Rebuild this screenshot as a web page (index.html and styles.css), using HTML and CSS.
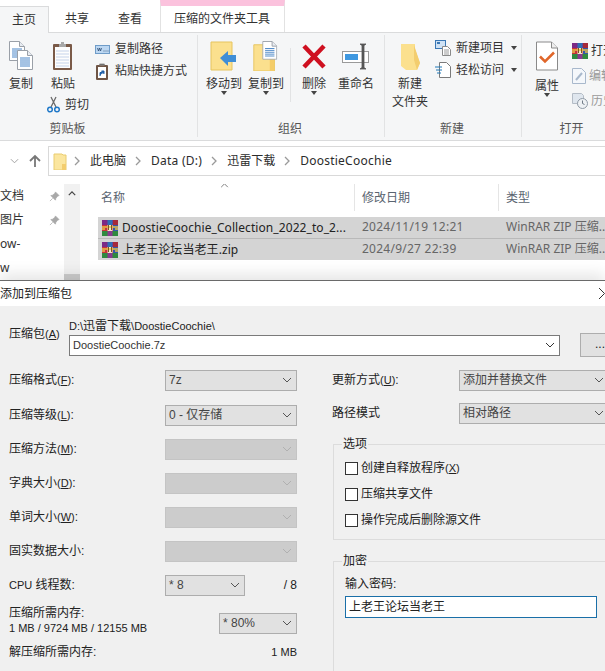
FILE: index.html
```html
<!DOCTYPE html>
<html lang="zh-CN">
  <head>
    <meta charset="UTF-8" />
    <title>添加到压缩包</title>
    <link rel="stylesheet" href="styles.css">
  </head>
  <body>
    <svg class="defs" width="0" height="0">
      <symbol id="rar" viewBox="0 0 16 16">
        <rect x="0" y="0" width="16" height="5" fill="#7b2a86"/>
        <rect x="5.5" y="0" width="5" height="5" fill="#2f6fb5"/>
        <rect x="11" y="0" width="5" height="5" fill="#a52a3a"/>
        <rect x="0" y="5" width="16" height="6" fill="#c8323a"/>
        <rect x="5.5" y="5" width="5" height="6" fill="#f1e6c8"/>
        <rect x="11" y="5" width="5" height="6" fill="#3558a8"/>
        <rect x="0" y="11" width="16" height="5" fill="#2f8a3f"/>
        <rect x="5.5" y="11" width="5" height="5" fill="#8a3a8f"/>
        <path d="M0 7h16M0 9h3M13 9h3" stroke="#e6c04a" stroke-width="1.4"/>
        <path d="M6.5 5v5M9.5 5v5" stroke="#7a5a20" stroke-width="1"/>
      </symbol>
      <symbol id="chev" viewBox="0 0 10 6">
        <path d="M1 1l4 4 4-4" fill="none" stroke="currentColor" stroke-width="1"/>
      </symbol>
      <symbol id="crumb" viewBox="0 0 6 10">
        <path d="M1 1l4 4-4 4" fill="none" stroke="#9a9a9a" stroke-width="1.3"/>
      </symbol>
      <symbol id="pin" viewBox="0 0 12 12">
        <path d="M7 1l4 4-1.5.5L7.500 8 7 10 2 5l2-.5L6.500 2.500zM4 8l-3 3" fill="#a8a8a8" stroke="#a8a8a8" stroke-width=".8"/>
      </symbol>
      <symbol id="page-lines" viewBox="0 0 16 20">
        <path d="M.5.500h10l5 5v14H.5z" fill="#fff" stroke="#9aa0a8"/>
        <path d="M10.500.500v5h5" fill="#e8ecf2" stroke="#9aa0a8"/>
        <path d="M3 8h10M3 10h10M3 12h10M3 14h10M3 16h10" stroke="#4a86c8"/>
      </symbol>
    </svg>

    <div class="page">
      <div class="tabs">
        <div class="tab active">主页</div>
        <div class="tab">共享</div>
        <div class="tab">查看</div>
        <div class="tab tool">压缩的文件夹工具</div>
      </div>

      <div class="ribbon">
        <section class="group clipboard">
          <div class="group-body">
            <div class="big w42">
              <svg class="icon" width="24" height="30" viewBox="0 0 24 30">
                <use href="#page-lines" x="0" y="0" width="16" height="20"/>
                <use href="#page-lines" x="8" y="9" width="16" height="20"/>
              </svg>
              <span>复制</span>
            </div>
            <div class="big w42">
              <svg class="icon" width="22" height="30" viewBox="0 0 22 30">
                <rect x="1" y="3" width="19" height="26" rx="1" fill="#7a5a48"/>
                <rect x="3" y="6" width="15" height="21" fill="#fdfdfd"/>
                <path d="M4 10h13M4 13h13M4 16h13M4 19h13M4 22h13M4 25h13" stroke="#c5d3ea"/>
                <path d="M7 6V3h2V1h3v2h2v3z" fill="#a8a8a8"/>
              </svg>
              <span>粘贴</span>
              <div class="small cut">
                <svg width="13" height="17" viewBox="0 0 13 17">
                  <path d="M4 1l5 10M9 1L4 11" stroke="#6a6a6a" stroke-width="1.300"/>
                  <circle cx="3" cy="13.500" r="2.300" fill="none" stroke="#1f78c8" stroke-width="1.500"/>
                  <circle cx="10" cy="13.500" r="2.300" fill="none" stroke="#1f78c8" stroke-width="1.500"/>
                </svg>
                <span>剪切</span>
              </div>
            </div>
            <div class="small-col">
              <div class="small">
                <svg width="15" height="9" viewBox="0 0 15 9">
                  <rect x=".5" y=".5" width="14" height="8" fill="#bcd7f2" stroke="#6f9cc8"/>
                  <path d="M2.500 3l1 3 1-3 1 3 1-3M8.500 6h1M10.500 6h1M12.500 6h1" fill="none" stroke="#2c4a70" stroke-width=".8"/>
                </svg>
                <span>复制路径</span>
              </div>
              <div class="small">
                <svg width="15" height="17" viewBox="0 0 15 17">
                  <rect x="1" y="2" width="12" height="15" rx="1" fill="#6f5546"/>
                  <rect x="3" y="4" width="8" height="11" fill="#fff"/>
                  <path d="M4.500 2V1h5v1z" stroke="#999"/>
                  <path d="M5 13V9.500h2.500M6 10l3 0M9 8l-2.500 0 2.500 2.500z" fill="#1f5fa8" stroke="#1f5fa8"/>
                </svg>
                <span>粘贴快捷方式</span>
              </div>
            </div>
          </div>
          <div class="group-label">剪贴板</div>
        </section>

        <section class="group organize">
          <div class="group-body">
            <div class="big w42 start6">
              <svg class="icon" width="28" height="30" viewBox="0 0 28 30">
                <path d="M1 1h21v28H1z" fill="#fbe08e" stroke="#e6c45f"/>
                <path d="M10 20l8-7v4h8v7h-8v4z" fill="#3f8ed6" transform="translate(0 -3)"/>
              </svg>
              <span>移动到</span>
              <i class="caret"></i>
            </div>
            <div class="big w42">
              <svg class="icon" width="28" height="32" viewBox="0 0 28 32">
                <path d="M1 4h22v28H1z" fill="#fbe08e" stroke="#e6c45f"/>
                <path d="M18 10h5v22h-5z" fill="#f4cd6a"/>
                <use href="#page-lines" x="10" y="0" width="16" height="20"/>
              </svg>
              <span>复制到</span>
              <i class="caret"></i>
            </div>
            <div class="vsep"></div>
            <div class="big w42">
              <svg class="icon" width="26" height="30" viewBox="0 0 26 30">
                <path d="M3 5l20 21M23 5L3 26" stroke="#cf1020" stroke-width="4.500"/>
              </svg>
              <span>删除</span>
              <i class="caret"></i>
            </div>
            <div class="big w42">
              <svg class="icon" width="30" height="30" viewBox="0 0 30 30">
                <rect x="1.500" y="10.500" width="26" height="11" fill="#fff" stroke="#9a9a9a"/>
                <rect x="4" y="13" width="13" height="6" fill="#3f98e0"/>
                <path d="M19 3h6l-2 1.500v22L25 28h-6l2-1.500v-22z" fill="#555" stroke="#555" stroke-width=".8"/>
              </svg>
              <span>重命名</span>
            </div>
          </div>
          <div class="group-label">组织</div>
        </section>

        <section class="group create">
          <div class="group-body">
            <div class="big new-folder">
              <svg class="icon" width="24" height="30" viewBox="0 0 24 30">
                <path d="M3 3h14v5l5 14-3 7H8L3 25z" fill="#fbe08e"/>
                <path d="M16 4l6 18-3 7-3-10z" fill="#f3cd6e"/>
              </svg>
              <span>新建</span>
              <span>文件夹</span>
            </div>
            <div class="small-col wide">
              <div class="small">
                <svg width="16" height="16" viewBox="0 0 16 16">
                  <rect x=".5" y=".5" width="10" height="8" fill="#cfe2f5" stroke="#3b78b5"/>
                  <rect x="2" y="2" width="3" height="2" fill="#3b78b5"/>
                  <path d="M7.500 6.500h5l3 3v6h-8z" fill="#fff" stroke="#8a8a8a"/>
                  <path d="M9 10h5M9 12h5M9 14h5" stroke="#9a9a9a"/>
                </svg>
                <span>新建项目</span>
                <i class="caret side"></i>
              </div>
              <div class="small">
                <svg width="16" height="16" viewBox="0 0 16 16">
                  <path d="M4.500.500h7l4 4v11h-11z" fill="#fff" stroke="#7a7a7a"/>
                  <path d="M0 5h7M1 8h6M2 11h4" stroke="#1f78b8"/>
                </svg>
                <span>轻松访问</span>
                <i class="caret side"></i>
              </div>
            </div>
          </div>
          <div class="group-label">新建</div>
        </section>

        <section class="group open">
          <div class="group-body">
            <div class="big props">
              <svg class="icon" width="22" height="29" viewBox="0 0 22 29">
                <path d="M.5.500h15l6 6v22H.5z" fill="#fff" stroke="#8a8a8a"/>
                <path d="M15.500.500v6h6" fill="#eee" stroke="#8a8a8a"/>
                <path d="M4 15l5 5 9-9" fill="none" stroke="#e0662a" stroke-width="2.500"/>
              </svg>
              <span>属性</span>
              <i class="caret"></i>
            </div>
            <div class="small-col narrow">
              <div class="small"><svg width="16" height="16"><use href="#rar"/></svg><span>打开</span></div>
              <div class="small muted">
                <svg width="14" height="16" viewBox="0 0 14 16">
                  <path d="M.5.500h9l4 4v11H.5z" fill="#f4f7fb" stroke="#a8b8cc"/>
                  <path d="M4 12l6-7" stroke="#a8b8cc" stroke-width="2"/>
                </svg>
                <span>编辑</span>
              </div>
              <div class="small muted">
                <svg width="16" height="16" viewBox="0 0 16 16">
                  <path d="M.5.500h9l2 2v8H.5z" fill="#dfe6ee" stroke="#b4bcc6"/>
                  <circle cx="10.500" cy="10.500" r="5" fill="#eef1f4" stroke="#8f9aa6"/>
                  <path d="M10.500 7.500v3l2 1" fill="none" stroke="#6f7a86"/>
                </svg>
                <span>历史</span>
              </div>
            </div>
          </div>
          <div class="group-label">打开</div>
        </section>
      </div>

      <div class="address-row">
        <svg class="back-chev" width="9" height="6"><use href="#chev"/></svg>
        <svg class="up" width="14" height="14" viewBox="0 0 14 14">
          <path d="M7 13V2M2 7l5-5 5 5" fill="none" stroke="#777" stroke-width="1.800"/>
        </svg>
        <div class="address">
          <svg class="addr-folder" width="14" height="17" viewBox="0 0 14 17">
            <path d="M1 1h8l1 1h3v15H1z" fill="#fbe69f" stroke="#e9cc70"/>
            <path d="M9 11h4v6H9z" fill="#f3cd6e"/>
          </svg>
          <svg class="crumb" width="6" height="10"><use href="#crumb"/></svg>
          <span>此电脑</span>
          <svg class="crumb" width="6" height="10"><use href="#crumb"/></svg>
          <span class="latin">Data (D:)</span>
          <svg class="crumb" width="6" height="10"><use href="#crumb"/></svg>
          <span>迅雷下载</span>
          <svg class="crumb" width="6" height="10"><use href="#crumb"/></svg>
          <span class="latin">DoostieCoochie</span>
        </div>
      </div>

      <div class="browser">
        <div class="nav">
          <div class="nav-item"><span>文档</span><svg width="11" height="11"><use href="#pin"/></svg></div>
          <div class="nav-item"><span>图片</span><svg width="11" height="11"><use href="#pin"/></svg></div>
          <div class="nav-item"><span>ow-</span></div>
          <div class="nav-item"><span>w</span></div>
        </div>
        <div class="scrollbar">
          <svg width="8" height="5" class="scroll-up" viewBox="0 0 10 6"><path d="M1 5l4-4 4 4" fill="none" stroke="#444" stroke-width="1.500"/></svg>
          <div class="thumb"></div>
        </div>
        <div class="files">
          <div class="file-head">
            <div class="col name">名称<svg class="sort" width="9" height="5" viewBox="0 0 10 6"><path d="M1 5l4-4 4 4" fill="none" stroke="#666"/></svg></div>
            <div class="col">修改日期</div>
            <div class="col last">类型</div>
          </div>
          <div class="file-row first">
            <div class="col name"><svg width="16" height="16"><use href="#rar"/></svg><span>DoostieCoochie_Collection_2022_to_2...</span></div>
            <div class="col date">2024/11/19 12:21</div>
            <div class="col last">WinRAR ZIP 压缩...</div>
          </div>
          <div class="file-row">
            <div class="col name"><svg width="16" height="16"><use href="#rar"/></svg><span>上老王论坛当老王.zip</span></div>
            <div class="col date">2024/9/27 22:39</div>
            <div class="col last">WinRAR ZIP 压缩...</div>
          </div>
        </div>
      </div>

      <div class="dialog">
        <div class="titlebar">
          <span>添加到压缩包</span>
          <svg width="6" height="11" viewBox="0 0 6 11"><path d="M0 0l5.500 5.500L0 11" fill="none" stroke="#333"/></svg>
        </div>
        <div class="dialog-body">
          <div class="archive">
            <div class="archive-label">压缩包<span class="lat">(<u>A</u>)</span></div>
            <div class="archive-field">
              <div class="archive-path"><span class="lat">D:\</span>迅雷下载<span class="lat">\DoostieCoochie\</span></div>
              <div class="combo"><span class="lat">DoostieCoochie.7z</span><svg width="10" height="6"><use href="#chev"/></svg></div>
            </div>
            <div class="browse-btn">...</div>
          </div>

          <div class="columns">
            <div class="col-left">
              <div class="field-row"><label>压缩格式<span class="lat">(<u>F</u>)</span>:</label><div class="select"><span>7z</span><svg width="10" height="6"><use href="#chev"/></svg></div></div>
              <div class="field-row"><label>压缩等级<span class="lat">(<u>L</u>)</span>:</label><div class="select"><span>0 - 仅存储</span><svg width="10" height="6"><use href="#chev"/></svg></div></div>
              <div class="field-row"><label>压缩方法<span class="lat">(<u>M</u>)</span>:</label><div class="select off"><span></span><svg width="10" height="6"><use href="#chev"/></svg></div></div>
              <div class="field-row"><label>字典大小<span class="lat">(<u>D</u>)</span>:</label><div class="select off"><span></span><svg width="10" height="6"><use href="#chev"/></svg></div></div>
              <div class="field-row"><label>单词大小<span class="lat">(<u>W</u>)</span>:</label><div class="select off"><span></span><svg width="10" height="6"><use href="#chev"/></svg></div></div>
              <div class="field-row"><label>固实数据大小:</label><div class="select off"><span></span><svg width="10" height="6"><use href="#chev"/></svg></div></div>
              <div class="field-row cpu"><label><span class="lat">CPU</span> 线程数:</label><div class="select short"><span>* 8</span><svg width="10" height="6"><use href="#chev"/></svg></div><span class="push">/ 8</span></div>
              <div class="memory-row">
                <div class="memory-text">
                  <div>压缩所需内存:</div>
                  <div class="lat">1 MB / 9724 MB / 12155 MB</div>
                </div>
                <div class="select percent"><span>* 80%</span><svg width="10" height="6"><use href="#chev"/></svg></div>
              </div>
              <div class="decompress-row"><span>解压缩所需内存:</span><span class="lat">1 MB</span></div>
            </div>

            <div class="col-right">
              <div class="field-row update"><label>更新方式<span class="lat">(<u>U</u>)</span>:</label><div class="select long"><span>添加并替换文件</span><svg width="10" height="6"><use href="#chev"/></svg></div></div>
              <div class="field-row update"><label>路径模式</label><div class="select long"><span>相对路径</span><svg width="10" height="6"><use href="#chev"/></svg></div></div>

              <fieldset class="options">
                <legend>选项</legend>
                <div class="check"><i class="box"></i><span>创建自释放程序<span class="lat">(<u>X</u>)</span></span></div>
                <div class="check"><i class="box"></i><span>压缩共享文件</span></div>
                <div class="check"><i class="box"></i><span>操作完成后删除源文件</span></div>
              </fieldset>

              <fieldset class="encrypt">
                <legend>加密</legend>
                <div class="password-label">输入密码:</div>
                <div class="password">上老王论坛当老王</div>
              </fieldset>
            </div>
          </div>
        </div>
      </div>
    </div>
  </body>
</html>
```

FILE: styles.css
```css
html,
body {
  margin: 0;
  padding: 0;
  overflow: hidden;
}
body {
  font-family: "Noto Sans", "Noto Sans CJK SC", sans-serif;
  font-size: 12px;
  line-height: 16px;
  color: #333;
  background: #fff;
}
svg {
  display: block;
  flex: none;
}
.defs {
  position: absolute;
}
.page {
  width: 605px;
  height: 671px;
  overflow: hidden;
}

/* ribbon tabs */
.tabs {
  display: flex;
  height: 32px;
  border-bottom: 1px solid #dadbdc;
}
.tab {
  margin-top: 6px;
  height: 26px;
  line-height: 26px;
  margin-left: 29px;
  white-space: nowrap;
}
.tab.active {
  margin-left: 0;
  width: 49px;
  height: 27px;
  box-sizing: border-box;
  padding-left: 12px;
  background: #f5f6f7;
  border-top: 1px solid #dadbdc;
  border-right: 1px solid #dadbdc;
  margin-right: -13px;
}
.tab.tool {
  margin-top: 0;
  margin-left: 18px;
  height: 32px;
  box-sizing: border-box;
  width: 125px;
  padding-left: 13px;
  line-height: 26px;
  border-top: 6px solid #fbc2dd;
  border-left: 1px solid #e2e2e2;
  border-right: 1px solid #e2e2e2;
}

/* ribbon */
.ribbon {
  display: flex;
  height: 107px;
  background: #f5f6f7;
  border-bottom: 1px solid #dadbdc;
  overflow: hidden;
}
.group {
  margin-top: 2px;
  height: 102px;
  box-sizing: border-box;
  border-right: 1px solid #e2e3e4;
  flex: none;
}
.clipboard { width: 198px; }
.organize { width: 187px; }
.create { width: 137px; }
.open { width: 83px; border-right: 0; }
.group-body {
  display: flex;
  height: 85px;
}
.group-label {
  text-align: center;
  color: #555;
  line-height: 17px;
}
.clipboard .group-label { padding-right: 62px; }
.organize .group-label { padding-right: 2px; }
.create .group-label { padding-right: 2px; }
.open .group-label { padding-left: 16px; }

.big {
  display: flex;
  flex-direction: column;
  align-items: center;
  flex: none;
  padding-top: 6px;
  white-space: nowrap;
}
.big .icon {
  height: 30px;
  margin-bottom: 5px;
}
.w42 { width: 42px; }
.start6 { margin-left: 5px; }
.small {
  display: flex;
  align-items: center;
  gap: 5px;
  white-space: nowrap;
}
.small-col {
  display: flex;
  flex-direction: column;
  gap: 6px;
  padding: 6px 0 0 11px;
}
.small-col .small { height: 16px; }
.cut {
  margin-top: 4px;
  margin-left: 10px;
}
.vsep {
  width: 1px;
  height: 54px;
  margin: 13px 2px 0 3px;
  background: #e2e3e4;
}
.caret {
  width: 0;
  height: 0;
  margin-top: -1px;
  border-left: 3px solid transparent;
  border-right: 3px solid transparent;
  border-top: 4px solid #444;
}
.caret.side {
  margin: 0 0 0 2px;
}
.new-folder {
  width: 50px;
  line-height: 18px;
}
.new-folder .icon {
  margin-bottom: 4px;
}
.small-col.wide {
  padding-left: 0;
  margin-top: -1px;
  gap: 6px;
}
.small-col.narrow {
  padding-left: 0;
  gap: 9px;
  margin-top: 2px;
}
.small-col.narrow .small {
  gap: 3px;
}
.props {
  width: 50px;
}
.props .icon {
  margin-bottom: 7px;
}
.muted {
  color: #9a9a9a;
}

/* address bar */
.address-row {
  display: flex;
  align-items: center;
  height: 30px;
  margin-top: 5px;
  padding-left: 10px;
}
.back-chev {
  color: #999;
  margin-right: 9px;
}
.up {
  margin-right: 6px;
}
.address {
  flex: 1;
  display: flex;
  align-items: center;
  height: 30px;
  box-sizing: border-box;
  padding-left: 4px;
  border: 1px solid #d9d9d9;
  border-right: 0;
  white-space: nowrap;
}
.address span {
  color: #2b2b2b;
}
.latin {
  letter-spacing: 0.25px;
}
.crumb {
  margin: 0 10px 0 9px;
}
.addr-folder + .crumb {
  margin-left: 7px;
}

/* file list */
.browser {
  display: flex;
  height: 104px;
}
.nav {
  width: 64px;
  padding-top: 8px;
  box-sizing: border-box;
}
.nav-item {
  display: flex;
  justify-content: space-between;
  align-items: center;
  height: 24px;
  padding: 0 4px 0 0;
}
.scrollbar {
  position: relative;
  width: 16px;
  margin-top: 8px;
  background: #f1f1f1;
}
.scroll-up {
  margin: 7px 0 0 4px;
}
.thumb {
  position: absolute;
  left: 0;
  right: 0;
  bottom: 0;
  height: 6px;
  background: #cdcdcd;
}
.files {
  margin-left: 18px;
  flex: 1;
  min-width: 0;
}
.file-head,
.file-row {
  display: grid;
  grid-template-columns: 257px 144px 1fr;
}
.file-head {
  height: 27px;
  margin-top: 8px;
  margin-bottom: 6px;
  color: #5a6470;
  line-height: 27px;
}
.file-head .col {
  position: relative;
  border-right: 1px solid #e5e5e5;
}
.file-head .last {
  border-right: 0;
}
.sort {
  position: absolute;
  left: 122px;
  top: -1px;
}
.col {
  padding-left: 7px;
  white-space: nowrap;
  overflow: hidden;
}
.col.name {
  padding-left: 3px;
}
.file-row {
  height: 21px;
  line-height: 20px;
  background: #d4d4d4;
  color: #666;
}
.file-row.first {
  height: 22px;
  box-sizing: border-box;
  border-bottom: 1px solid #b9b9b9;
}
.file-row .name {
  display: flex;
  align-items: center;
  gap: 4px;
  padding-left: 4px;
  color: #222;
  letter-spacing: 0.08px;
}
.date {
  letter-spacing: 0.25px;
}

/* add to archive dialog */
.dialog {
  position: relative;
  border-top: 1px solid #6a6a6a;
  box-shadow: 0 -6px 14px rgba(0, 0, 0, 0.1);
  background: #f0f0f0;
  color: #222;
  font-family: "Liberation Sans", "Noto Sans CJK SC", sans-serif;
}
.lat {
  font-size: 11px;
}
.titlebar {
  display: flex;
  justify-content: space-between;
  align-items: center;
  height: 25px;
  background: #fff;
}
.dialog-body {
  height: 366px;
  overflow: hidden;
}
u {
  text-underline-offset: 1px;
}
.archive {
  display: flex;
  padding: 12px 0 0 9px;
}
.archive-label {
  width: 60px;
  flex: none;
  margin-top: 8px;
}
.archive-field {
  width: 491px;
  flex: none;
}
.archive-path {
  height: 17px;
}
.combo,
.select {
  display: flex;
  justify-content: space-between;
  align-items: center;
  height: 21px;
  box-sizing: border-box;
  padding: 0 4px 1px 3px;
  white-space: nowrap;
}
.combo {
  background: #fff;
  border: 1px solid #7a7a7a;
  color: #333;
}
.browse-btn {
  flex: none;
  width: 40px;
  height: 24px;
  margin: 15px 0 0 20px;
  box-sizing: border-box;
  background: #e1e1e1;
  border: 1px solid #adadad;
  text-align: center;
  line-height: 20px;
}
.columns {
  display: flex;
  margin-top: 13px;
  padding-left: 9px;
  gap: 35px;
}
.col-left {
  width: 288px;
  flex: none;
}
.col-right {
  width: 300px;
  flex: none;
}
.field-row {
  display: flex;
  align-items: center;
  height: 21px;
  margin-bottom: 13px;
  white-space: nowrap;
}
.col-left .field-row:first-child {
  margin-bottom: 14px;
}
.field-row label {
  width: 156px;
  flex: none;
  padding-bottom: 2px;
}
.select {
  width: 132px;
  flex: none;
  background: #e1e1e1;
  border: 1px solid #adadad;
  color: #444;
}
.select svg {
  color: #555;
}
.select.off {
  background: #cccccc;
  border-color: #c4c4c4;
}
.select.off svg {
  color: #b0b0b0;
}
.select.short {
  width: 80px;
}
.push {
  margin-left: auto;
  padding-bottom: 2px;
}
.cpu {
  margin-bottom: 11px;
}
.memory-row {
  display: flex;
  justify-content: space-between;
  height: 30px;
}
.memory-text {
  line-height: 15px;
  margin-top: -1px;
  white-space: nowrap;
}
.select.percent {
  width: 78px;
  margin-top: 6px;
}
.decompress-row {
  display: flex;
  justify-content: space-between;
  margin-top: 7px;
}
.col-right .update {
  margin-bottom: 12px;
}
.update label {
  width: 127px;
}
.select.long {
  width: 150px;
}
.options,
.encrypt {
  margin: 0 0 0 1px;
  padding: 0 0 0 11px;
  min-width: 0;
  width: 280px;
  border: 1px solid #dcdcdc;
}
legend {
  margin-left: -3px;
  padding: 0 1px;
}
.options {
  padding-top: 8px;
  padding-bottom: 1px;
}
.check {
  display: flex;
  align-items: center;
  gap: 3px;
  height: 16px;
  margin-bottom: 10px;
  white-space: nowrap;
}
.box {
  width: 13px;
  height: 13px;
  box-sizing: border-box;
  background: #fff;
  border: 1px solid #333;
}
.encrypt {
  margin-top: 13px;
  padding-top: 7px;
  height: 120px;
}
.password-label {
  height: 20px;
}
.password {
  width: 252px;
  height: 22px;
  box-sizing: border-box;
  padding-left: 3px;
  background: #fff;
  border: 1px solid #1a6fa8;
  line-height: 20px;
}
```
